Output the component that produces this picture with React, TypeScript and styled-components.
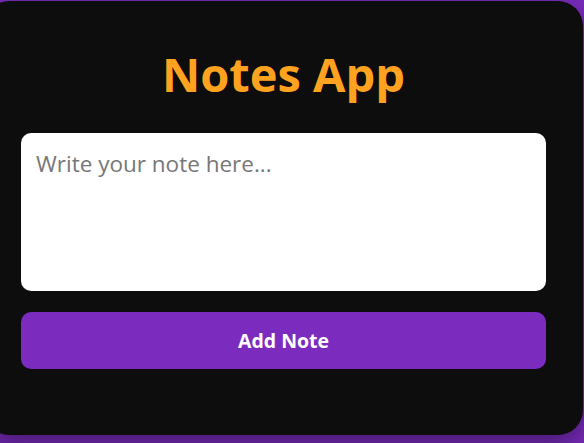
import React from "react";
import styled, { createGlobalStyle } from "styled-components";

const Global = createGlobalStyle`
  html, body { margin: 0; padding: 0; }
  body {
    background: #7b2cbf;
    font-family: "Open Sans", "Noto Sans", sans-serif;
    overflow: hidden;
  }
`;

const Page = styled.div`
  width: 584px;
  height: 443px;
  overflow: hidden;
  display: flex;
  align-items: flex-start;
`;

const Card = styled.div`
  flex: 0 0 auto;
  box-sizing: border-box;
  width: 599px;
  height: 434px;
  margin: 1px 0 0 -16px;
  padding: 44px 37px 0 37px;
  background: #0d0d0d;
  border-radius: 25px;
  box-shadow: 0 10px 30px rgba(0, 0, 0, 0.45);
  display: flex;
  flex-direction: column;
`;

const Title = styled.h1`
  margin: 0 0 30px;
  text-align: center;
  color: #ffa21f;
  font-size: 47px;
  line-height: 58px;
  font-weight: 700;
`;

const NoteInput = styled.textarea`
  box-sizing: border-box;
  width: 100%;
  height: 158px;
  padding: 15px;
  border: none;
  border-radius: 10px;
  background: #ffffff;
  color: #222;
  font-family: "Open Sans", "Noto Sans", sans-serif;
  font-size: 22.5px;
  resize: none;
  outline: none;
  &::placeholder { color: #777; }
`;

const AddButton = styled.button`
  margin-top: 21px;
  height: 57px;
  width: 100%;
  border: none;
  border-radius: 10px;
  background: #7b2cbf;
  color: #fff;
  font-family: "Open Sans", "Noto Sans", sans-serif;
  font-weight: 700;
  font-size: 19.5px;
  cursor: pointer;
`;

export default function App() {
  return (
    <>
      <Global />
      <Page>
        <Card>
          <Title>Notes App</Title>
          <NoteInput placeholder="Write your note here..." />
          <AddButton>Add Note</AddButton>
        </Card>
      </Page>
    </>
  );
}
